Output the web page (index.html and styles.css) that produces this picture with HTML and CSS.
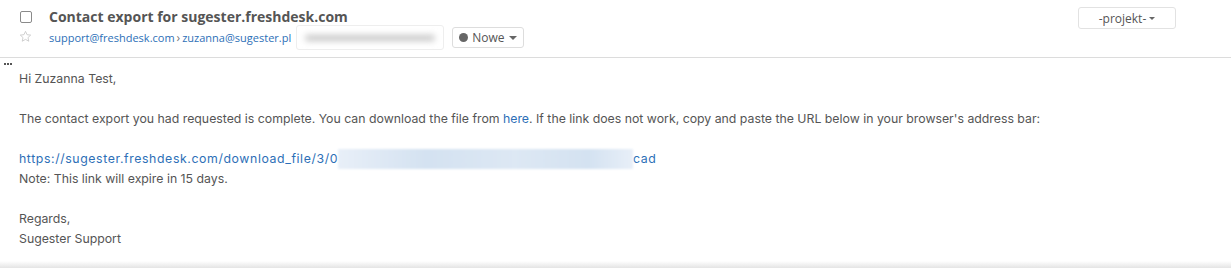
FILE: index.html
```html
<!DOCTYPE html>
<html lang="en">

<head>
    <meta charset="UTF-8">
    <meta name="viewport" content="width=device-width, initial-scale=1.0">
    <title>Contact export</title>
    <link rel="stylesheet" href="styles.css">
</head>

<body>

    <div class="mail-header">
        <div class="mail-tools">
            <span class="checkbox"></span>
            <svg class="star" width="13" height="13" viewBox="0 0 24 24">
                <path d="M12 2.5l2.9 6.2 6.7.7-5 4.6 1.4 6.7L12 17.3l-6 3.4 1.4-6.7-5-4.6 6.7-.7z" fill="none" stroke="#c8c8c8" stroke-width="1.6" stroke-linejoin="round"/>
            </svg>
        </div>
        <div class="mail-info">
            <div class="subject">Contact export for sugester.freshdesk.com</div>
            <div class="meta">
                <span class="address">support@freshdesk.com</span>
                <span class="arrow">›</span>
                <span class="address">zuzanna@sugester.pl</span>
                <span class="redacted-box"><span class="blur-text"></span></span>
                <span class="status-btn"><span class="dot"></span>Nowe<span class="caret"></span></span>
            </div>
        </div>
        <div class="project-btn">-projekt-<span class="caret small"></span></div>
    </div>

    <div class="more"><span></span><span></span><span></span></div>

    <div class="mail-body">
        Hi Zuzanna Test,<br>
        <br>
        The contact export you had requested is complete. You can download the file from <a href="#">here</a>. If the link does not work, copy and paste the URL below in your browser's address bar:<br>
        <br>
        <a href="#" class="url">https://sugester.freshdesk.com/download_file/3/0<span class="blur-link"></span>cad</a><br>
        Note: This link will expire in 15 days.<br>
        <br>
        Regards,<br>
        Sugester Support
    </div>

    <div class="bottom-shade"></div>

</body>

</html>
```

FILE: styles.css
```css
body {
    margin: 0;
    background-color: #fff;
    font-family: "Inter", "Liberation Sans", Arial, sans-serif;
    color: #555;
    height: 268px;
    overflow: hidden;
    position: relative;
}

.mail-header {
    display: flex;
    align-items: flex-start;
    height: 58px;
    border-bottom: 1px solid #dcdcdc;
    box-sizing: border-box;
}

.mail-tools {
    display: flex;
    flex-direction: column;
    align-items: center;
    width: 13px;
    margin-left: 19px;
    padding-top: 11px;
}

.checkbox {
    display: block;
    width: 10px;
    height: 10px;
    border: 1px solid #8a8a8a;
    border-radius: 2px;
}

.star {
    margin-top: 7px;
}

.mail-info {
    margin-left: 17px;
    flex: 1;
    padding-top: 7px;
    font-family: "Open Sans", sans-serif;
}

.subject {
    font-size: 14px;
    font-weight: bold;
    color: #555;
    line-height: 20px;
}

.meta {
    display: flex;
    align-items: center;
    margin-top: -2px;
    font-size: 11px;
    height: 25px;
}

.address {
    color: #2d6fb7;
}

.arrow {
    color: #777;
    margin: 0 2px;
    font-size: 12px;
}

.redacted-box {
    display: flex;
    align-items: center;
    justify-content: center;
    width: 148px;
    height: 25px;
    margin-left: 5px;
    border: 1px solid #eee;
    border-radius: 3px;
    box-sizing: border-box;
}

.blur-text {
    width: 130px;
    height: 6px;
    background-color: #c6c6c6;
    border-radius: 3px;
    filter: blur(3px);
}

.status-btn {
    display: flex;
    align-items: center;
    height: 21px;
    margin-left: 8px;
    padding: 0 6px;
    border: 1px solid #ddd;
    border-radius: 3px;
    font-size: 12px;
    color: #555;
    box-sizing: border-box;
}

.dot {
    width: 9px;
    height: 9px;
    margin-right: 4px;
    border-radius: 50%;
    background-color: #666;
}

.caret {
    display: inline-block;
    width: 0;
    height: 0;
    margin-left: 4px;
    border-left: 4px solid transparent;
    border-right: 4px solid transparent;
    border-top: 4px solid #666;
}

.caret.small {
    margin-left: 3px;
    border-left-width: 3px;
    border-right-width: 3px;
    border-top-width: 3px;
}

.project-btn {
    display: flex;
    align-items: center;
    justify-content: center;
    width: 98px;
    height: 22px;
    margin-top: 7px;
    margin-right: 55px;
    border: 1px solid #e2e2e2;
    border-radius: 3px;
    box-sizing: border-box;
    font-family: "Open Sans", sans-serif;
    font-size: 12px;
    color: #555;
}

.more {
    display: flex;
    gap: 1px;
    margin-left: 4px;
    padding-top: 5px;
    height: 2px;
}

.more span {
    width: 2px;
    height: 2px;
    background-color: #555;
}

.mail-body {
    padding-left: 19px;
    margin-top: 4px;
    font-size: 12.3px;
    line-height: 20px;
    color: #555;
}

.mail-body a {
    color: #2d6fb7;
    text-decoration: none;
}

.mail-body .url {
    letter-spacing: 0.6px;
}

.blur-link {
    display: inline-block;
    width: 295px;
    height: 20px;
    vertical-align: -6px;
    background: linear-gradient(90deg, #e8eff8, #d4e2f1 30%, #dde8f4 60%, #d4e2f1 85%, #e8eff8);
    filter: blur(1px);
}

.bottom-shade {
    position: absolute;
    left: 0;
    right: 0;
    bottom: 0;
    height: 7px;
    background: linear-gradient(#fff, #e4e4e4);
}
```
